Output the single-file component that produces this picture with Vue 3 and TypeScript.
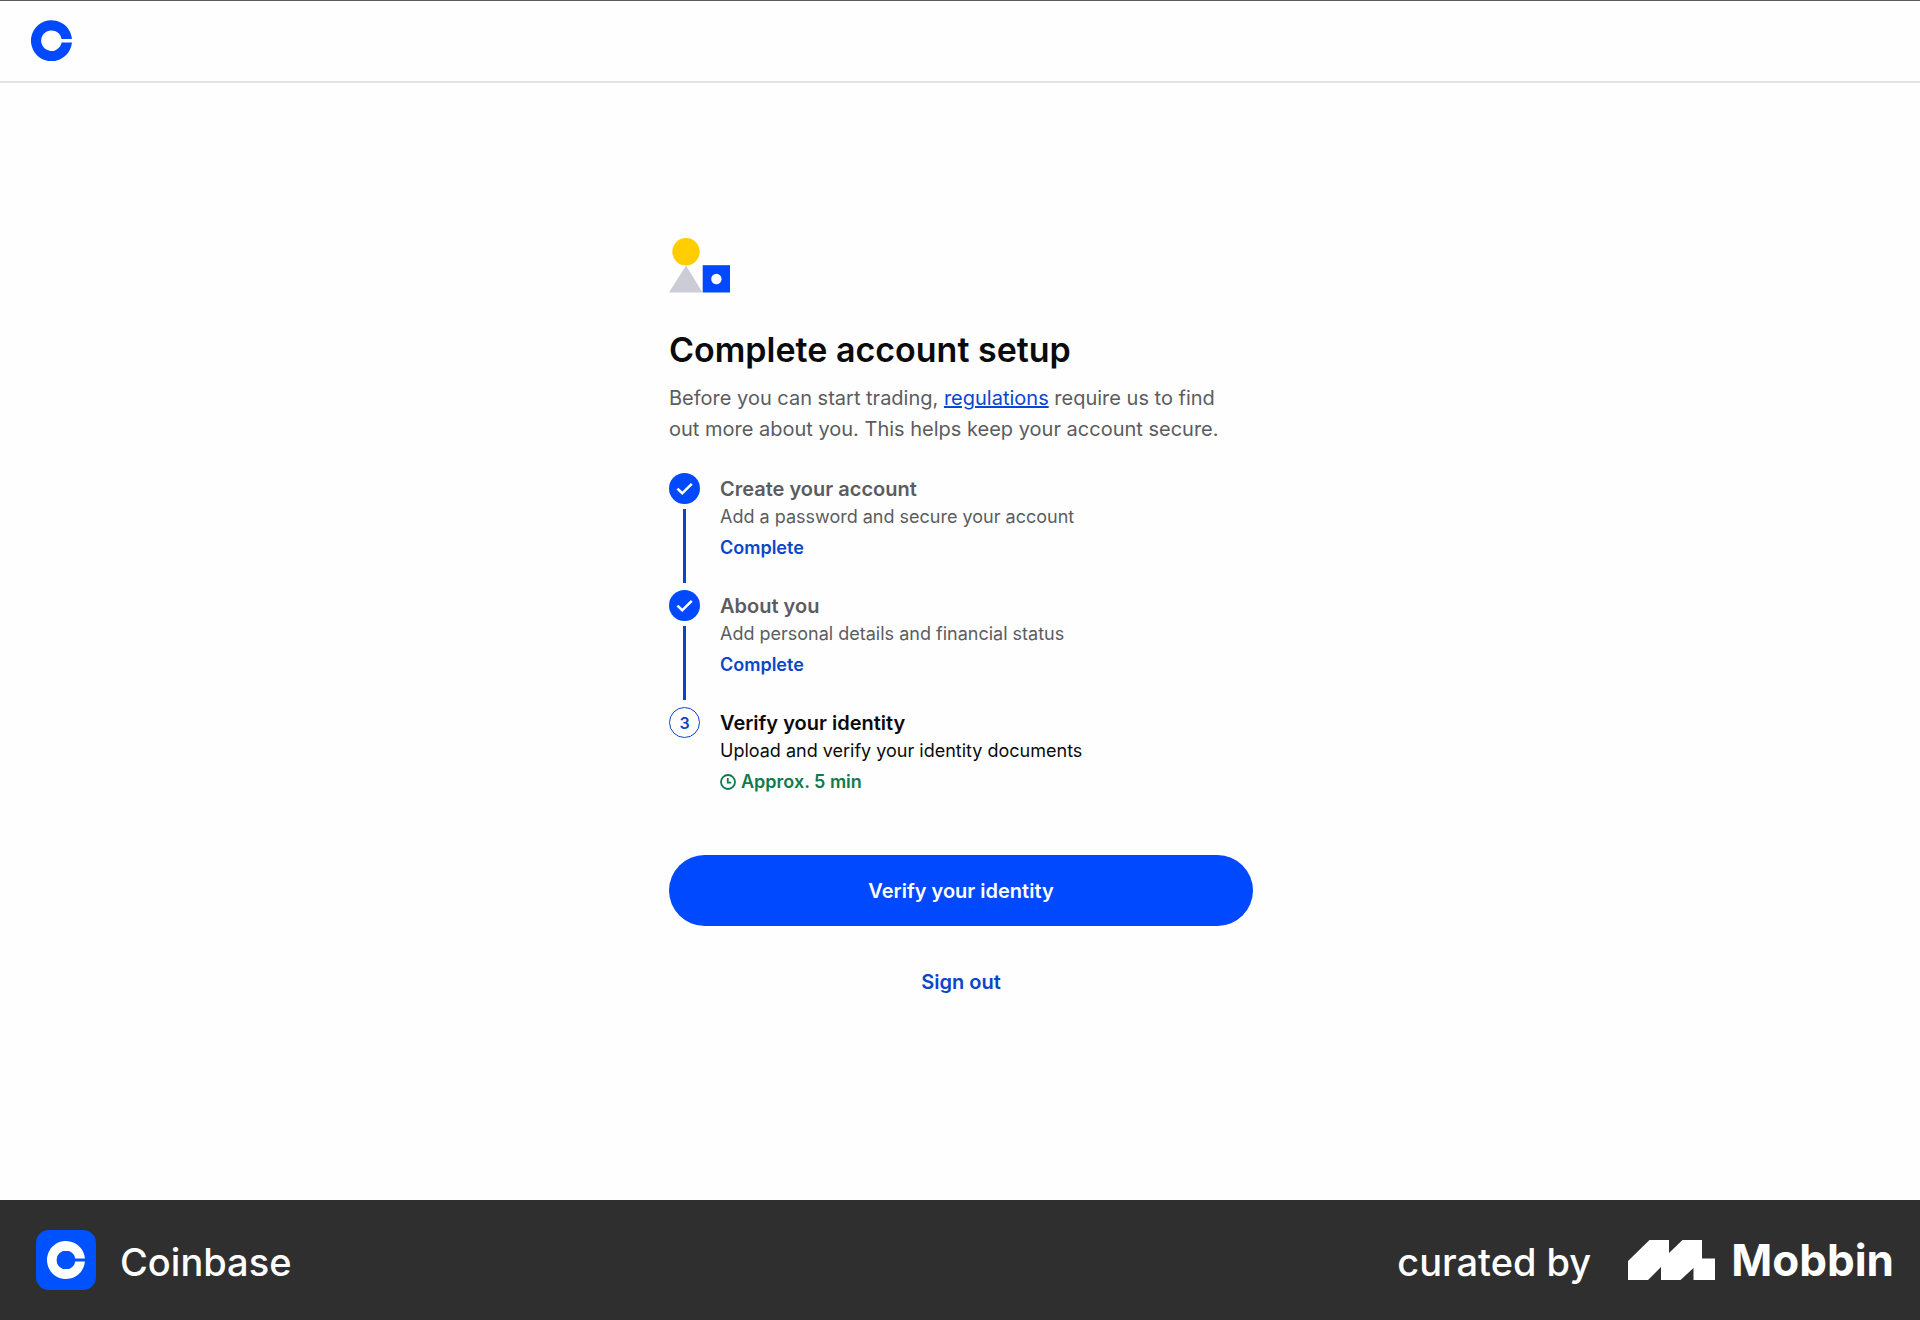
<script setup lang="ts">
interface Step {
  title: string
  detail: string
  status: string
  done: boolean
}

const steps: Step[] = [
  { title: 'Create your account', detail: 'Add a password and secure your account', status: 'Complete', done: true },
  { title: 'About you', detail: 'Add personal details and financial status', status: 'Complete', done: true },
  { title: 'Verify your identity', detail: 'Upload and verify your identity documents', status: 'Approx. 5 min', done: false },
]
</script>

<template>
  <div class="page">
    <header class="topbar">
      <a class="home" href="#" aria-label="Coinbase home">
        <svg class="home-logo" viewBox="0 0 41 41" aria-hidden="true">
          <path fill="#0049ff" d="M40.9 19A20.5 20.5 0 1 0 40.9 22.4H30.6A10.3 10.3 0 1 1 30.6 19Z" />
        </svg>
      </a>
    </header>

    <main class="content">
      <section class="panel">
        <svg class="shapes" viewBox="0 0 61 55" aria-hidden="true">
          <circle cx="17" cy="13.7" r="13.7" fill="#ffcd00" />
          <path d="M17 27.5L33.5 54.5H0Z" fill="#cbccd6" />
          <rect x="33.7" y="27.2" width="27.3" height="27.3" fill="#0049ff" />
          <circle cx="47.4" cy="41" r="5.2" fill="#fff" />
        </svg>

        <h1 class="title">Complete account setup</h1>
        <p class="intro">
          Before you can start trading, <a class="inline-link" href="#">regulations</a> require us to find<br />
          out more about you. This helps keep your account secure.
        </p>

        <ol class="steps">
          <li v-for="(step, i) in steps" :key="step.title" class="step" :class="{ current: !step.done }">
            <div class="rail">
              <span class="marker" :class="{ done: step.done }">
                <svg v-if="step.done" class="check" viewBox="0 0 31 31" aria-hidden="true">
                  <path d="M8.4 15.6L13.2 20.300L22.800 10.800" fill="none" stroke="#fff" stroke-width="2.6" />
                </svg>
                <template v-else>{{ i + 1 }}</template>
              </span>
              <span v-if="i < steps.length - 1" class="line"></span>
            </div>
            <div class="step-body">
              <h2 class="step-title">{{ step.title }}</h2>
              <p class="step-detail">{{ step.detail }}</p>
              <p class="step-status">
                <svg v-if="!step.done" class="clock" viewBox="0 0 16 16" aria-hidden="true">
                  <circle cx="8" cy="8" r="7" fill="none" stroke="currentColor" stroke-width="1.8" />
                  <path d="M7.8 4V8.6H11.2" fill="none" stroke="currentColor" stroke-width="1.8" />
                </svg>
                <span>{{ step.status }}</span>
              </p>
            </div>
          </li>
        </ol>

        <button class="primary" type="button">Verify your identity</button>
        <button class="secondary" type="button">Sign out</button>
      </section>
    </main>

    <footer class="footer">
      <div class="brand">
        <svg class="tile" viewBox="0 0 60 60" aria-hidden="true">
          <rect width="60" height="60" rx="13" fill="#0052ff" />
          <path fill="#fff" d="M48.9 28.4A19 19 0 1 0 48.9 31.6H39.2A9.5 9.5 0 0 1 34.500 38.300Q33.500 39 32.500 39H27.500Q26.500 39 25.500 38.300A9.500 9.500 0 0 1 25.500 21.700Q26.500 21 27.500 21H32.500Q33.500 21 34.500 21.700A9.500 9.500 0 0 1 39.200 28.400Z" />
        </svg>
        <span class="brand-name">Coinbase</span>
      </div>
      <div class="credit">
        <span class="credit-text">curated by</span>
        <svg class="mobbin-mark" viewBox="0 0 87 40" aria-hidden="true">
          <path fill="#fff" d="M0 21L21.500 0H41V13L54.500 0H74V18.500H87V40H65.500V28L52.500 40H33V27L20 40H0Z" />
        </svg>
        <span class="mobbin-name">Mobbin</span>
      </div>
    </footer>
  </div>
</template>

<style>
body {
  margin: 0;
  background: #fefefe;
}
</style>

<style scoped>
.page {
  display: flex;
  flex-direction: column;
  min-height: 100vh;
  font-family: Inter, 'Liberation Sans', sans-serif;
  color: #0a0b0d;
}

h1,
h2,
p,
ol {
  margin: 0;
  padding: 0;
}

button {
  border: 0;
  font-family: inherit;
  cursor: pointer;
}

.topbar {
  display: flex;
  align-items: center;
  box-sizing: border-box;
  height: 83px;
  padding: 0 31px 2px;
  border-top: 1px solid #5a5a5e;
  border-bottom: 2px solid #e2e3e6;
}

.home {
  display: flex;
}

.home-logo {
  width: 41px;
  height: 41px;
}

.content {
  flex: 1;
  display: flex;
  justify-content: center;
  padding: 155px 24px 80px 26px;
}

.panel {
  display: flex;
  flex-direction: column;
  width: 100%;
  max-width: 584px;
}

.shapes {
  width: 61px;
  height: 55px;
}

.title {
  margin-top: 33px;
  font-size: 34px;
  line-height: 48px;
  font-weight: 600;
}

.intro {
  margin-top: 9px;
  font-size: 20px;
  line-height: 31px;
  color: #5b5c60;
}

.inline-link {
  color: #0a46d2;
  text-decoration-thickness: 2px;
}

.steps {
  margin-top: 28px;
  list-style: none;
}

.step {
  display: flex;
  gap: 20px;
  min-height: 117px;
  color: #5b5c60;
}

.step.current {
  color: #0a0b0d;
}

.rail {
  display: flex;
  flex-direction: column;
  align-items: center;
  gap: 5px;
  width: 31px;
}

.marker {
  display: flex;
  align-items: center;
  justify-content: center;
  box-sizing: border-box;
  width: 31px;
  height: 31px;
  border: 1px solid #0a46d2;
  border-radius: 50%;
  color: #0a46c8;
  font-size: 16px;
  font-weight: 600;
}

.marker.done {
  border: 0;
  background: #0049ff;
}

.check {
  width: 31px;
  height: 31px;
}

.line {
  width: 3px;
  height: 74px;
  background: #0a46c8;
}

.step-title {
  font-size: 20px;
  line-height: 32px;
  font-weight: 600;
}

.step-detail {
  font-size: 18px;
  line-height: 24px;
}

.step-status {
  display: flex;
  align-items: center;
  gap: 5px;
  margin-top: 4px;
  font-size: 18px;
  line-height: 30px;
  font-weight: 600;
  color: #0a46c8;
}

.current .step-status {
  color: #0f7a4d;
}

.clock {
  width: 16px;
  height: 16px;
}

.primary {
  margin-top: 31px;
  height: 71px;
  border-radius: 36px;
  background: #0049ff;
  color: #fff;
  font-size: 20px;
  font-weight: 600;
}

.secondary {
  align-self: center;
  margin-top: 32px;
  padding: 8px 24px;
  background: transparent;
  color: #0a46c8;
  font-size: 20px;
  line-height: 32px;
  font-weight: 600;
}

.footer {
  display: flex;
  align-items: center;
  justify-content: space-between;
  height: 120px;
  padding: 0 26px 0 36px;
  background: #2f2f2f;
  color: #fff;
}

.brand,
.credit {
  display: flex;
  align-items: center;
}

.brand {
  gap: 24px;
}

.tile {
  width: 60px;
  height: 60px;
}

.brand-name,
.credit-text {
  padding-top: 4px;
  font-size: 38px;
  line-height: 48px;
  font-weight: 500;
}

.mobbin-mark {
  width: 87px;
  height: 40px;
  margin: 0 16px 0 37px;
}

.mobbin-name {
  font-size: 44px;
  line-height: 48px;
  font-weight: 700;
}
</style>
